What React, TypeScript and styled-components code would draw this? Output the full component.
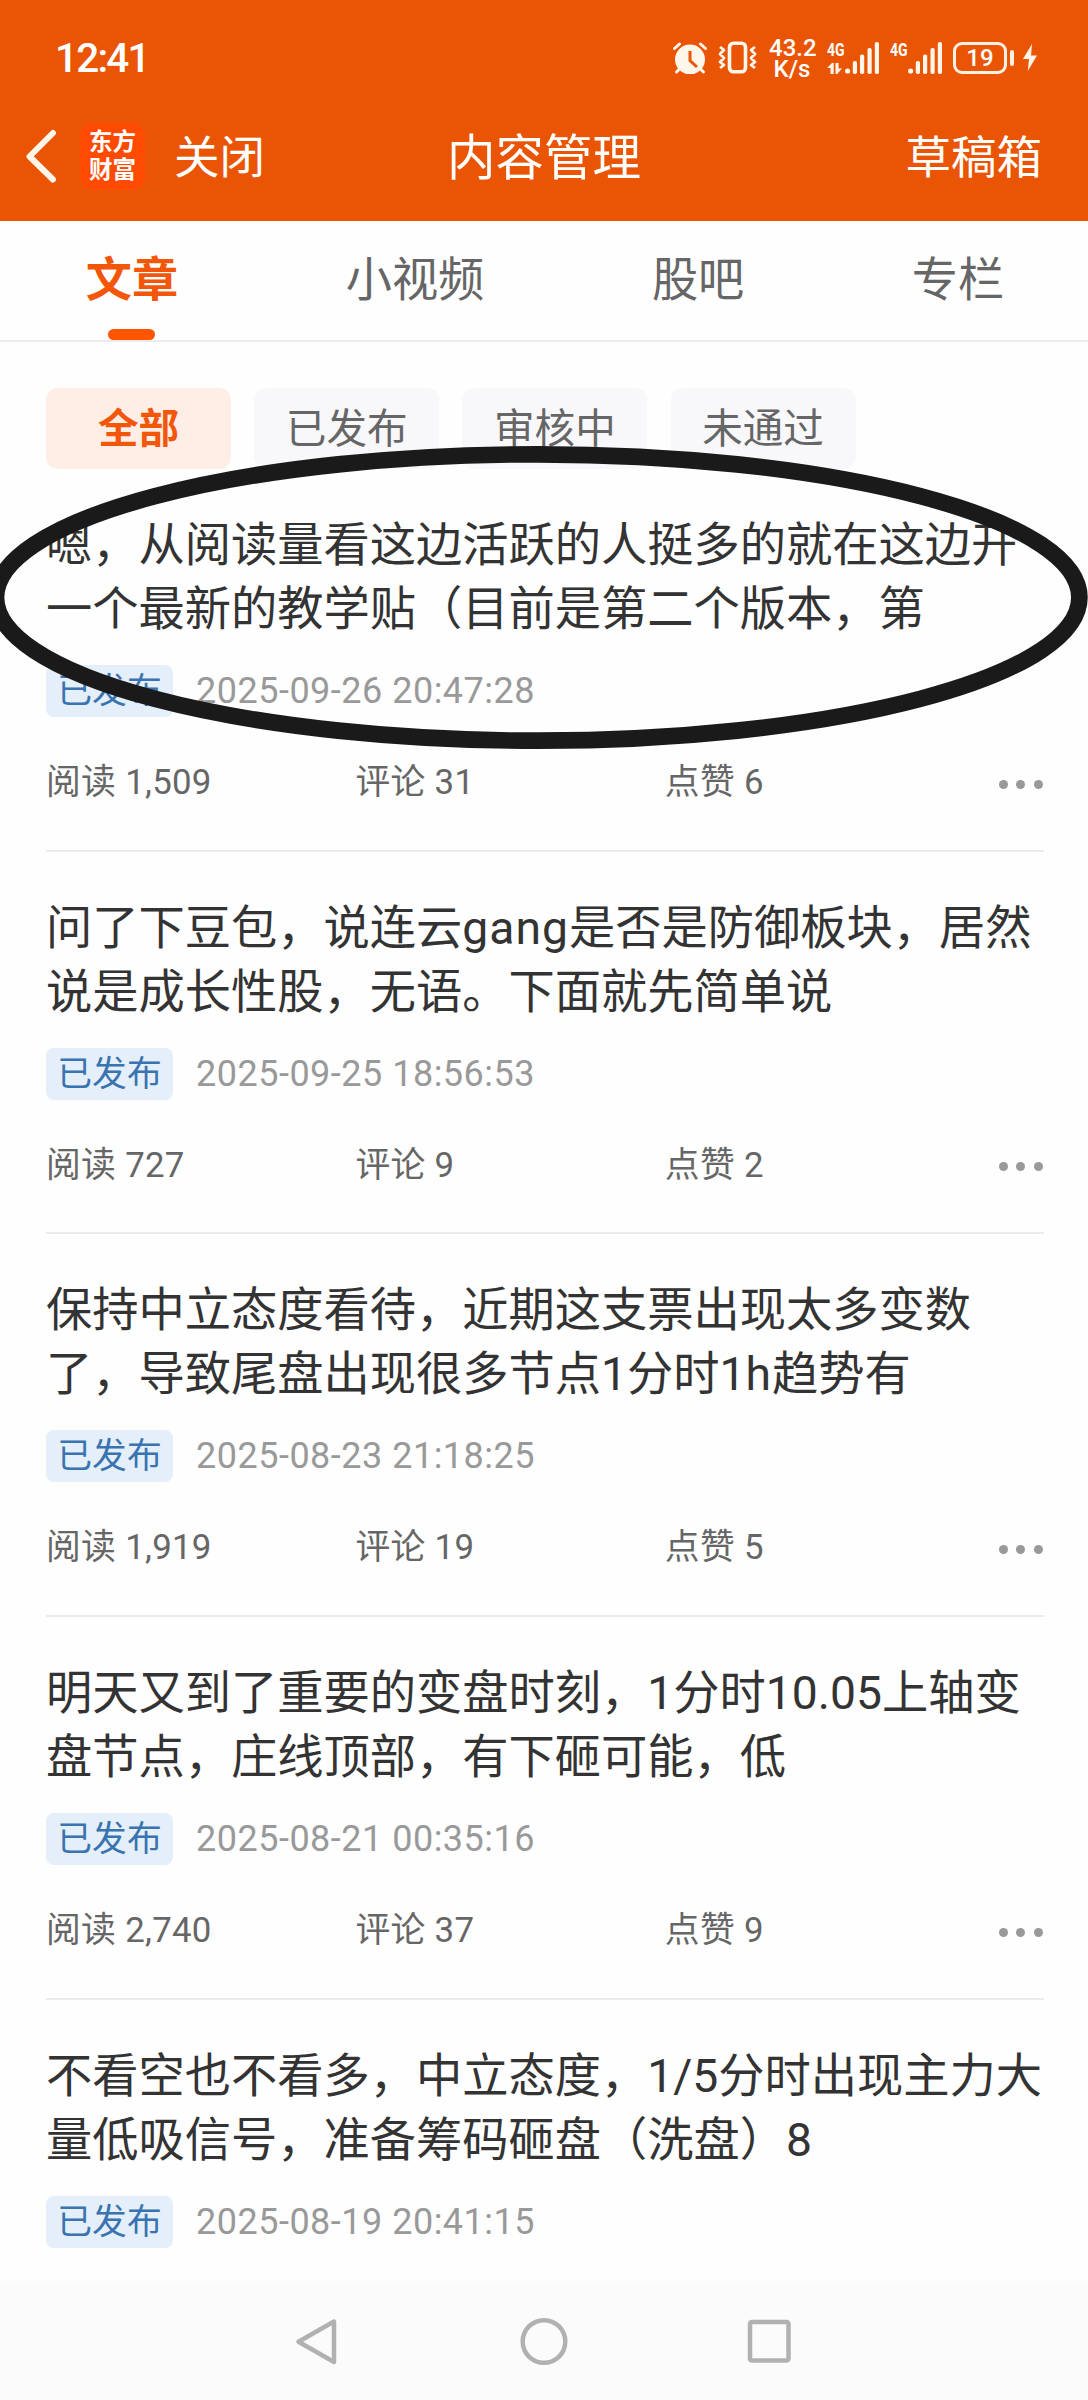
import React from "react";
import styled, { createGlobalStyle } from "styled-components";

const GlobalStyle = createGlobalStyle`
  *, *::before, *::after { box-sizing: border-box; }
  body {
    margin: 0;
    background: #fefefe;
    font-family: Roboto, "Noto Sans CJK SC", sans-serif;
    color: #333;
    -webkit-font-smoothing: antialiased;
  }
`;

const Screen = styled.div`
  position: relative;
  width: 1088px;
  height: 2400px;
  overflow: hidden;
  display: flex;
  flex-direction: column;
  background: #fefefe;
`;

/* ---------- header ---------- */

const Header = styled.header`
  flex: none;
  height: 221px;
  background: #e95504;
  color: #fff;
`;

const StatusBar = styled.div`
  height: 115px;
  padding: 0 51px 0 55px;
  display: flex;
  align-items: center;
  justify-content: space-between;
`;

const Clock = styled.span`
  font-size: 40.5px;
  font-weight: 500;
  letter-spacing: -1.8px;
  line-height: 1;
  padding-top: 1px;
`;

const StatusIcons = styled.div`
  display: flex;
  align-items: center;
  svg { display: block; }
`;

const Speed = styled.div`
  width: 46px;
  margin: 2px 12px 0 12px;
  text-align: center;
  font-size: 24px;
  font-weight: 500;
  line-height: 21px;
`;

const Signal = styled.div<{ $gap: number }>`
  display: flex;
  align-items: flex-end;
  height: 32px;
  margin-right: ${(p) => p.$gap}px;
`;

const SignalLabel = styled.div`
  width: 18px;
  height: 32px;
  display: flex;
  flex-direction: column;
  justify-content: space-between;
  font-size: 19px;
  font-weight: 700;
  line-height: 15px;
  span {
    display: block;
    transform: scaleX(0.74);
    transform-origin: left center;
  }
`;

const Battery = styled.div`
  width: 54px;
  height: 32px;
  border: 3.5px solid #fff2e4;
  border-radius: 9px;
  display: flex;
  align-items: center;
  justify-content: center;
  font-size: 24px;
  font-weight: 500;
  line-height: 1;
`;

const BatteryTip = styled.div`
  width: 4px;
  height: 16px;
  margin: 0 9px 0 3px;
  border-radius: 2px;
  background: #fff2e4;
`;

const NavBar = styled.div`
  height: 82px;
  padding: 0 46px 0 25px;
  display: grid;
  grid-template-columns: 1fr auto 1fr;
  align-items: center;
`;

const NavLeft = styled.div`
  display: flex;
  align-items: center;
  svg { display: block; }
`;

const Logo = styled.div`
  width: 65px;
  height: 67px;
  margin: 0 29px 0 23px;
  border-radius: 13px;
  background: #ff4a02;
  display: flex;
  flex-direction: column;
  align-items: center;
  justify-content: center;
  font-size: 23.5px;
  font-weight: 700;
  line-height: 28px;
`;

const NavText = styled.span`
  padding-top: 5px;
  font-size: 45.5px;
  line-height: 60px;
`;

const NavTitle = styled.h1`
  margin: 5px 0 0 21px;
  font-size: 48.5px;
  font-weight: 400;
  line-height: 60px;
`;

const NavRight = styled.div`
  display: flex;
  justify-content: flex-end;
`;

/* ---------- tabs and filters ---------- */

const Tabs = styled.nav`
  flex: none;
  height: 121px;
  padding-left: 2px;
  display: flex;
  justify-content: space-around;
  border-bottom: 2px solid #ededed;
`;

const Tab = styled.div<{ $active?: boolean }>`
  display: flex;
  flex-direction: column;
  align-items: center;
  justify-content: space-between;
  padding-top: 24px;
  font-size: 46.2px;
  line-height: 70px;
  font-weight: ${(p) => (p.$active ? 700 : 400)};
  color: ${(p) => (p.$active ? "#f2560a" : "#666")};
`;

const TabMark = styled.i`
  width: 47px;
  height: 11px;
  border-radius: 6px;
  background: #ff5500;
`;

const Filters = styled.div`
  flex: none;
  display: flex;
  gap: 23.2px;
  padding: 46px 46px 0;
`;

const Chip = styled.div<{ $active?: boolean }>`
  width: 185px;
  height: 81px;
  border-radius: 12px;
  display: flex;
  align-items: center;
  justify-content: center;
  font-size: 40.6px;
  line-height: 60px;
  font-weight: ${(p) => (p.$active ? 700 : 400)};
  color: ${(p) => (p.$active ? "#f2560a" : "#666")};
  background: ${(p) => (p.$active ? "#ffeee6" : "#f8f8fb")};
`;

/* ---------- article list ---------- */

const List = styled.main`
  flex: 1;
  min-height: 0;
  overflow: hidden;
  padding: 0 44.500px 0 46px;
`;

const Article = styled.article`
  height: 382.7px;
  padding-top: 44px;
  border-bottom: 2px solid #ebebeb;
`;

const Title = styled.h2`
  margin: 0;
  font-size: 46.25px;
  font-weight: 400;
  line-height: 64px;
  white-space: nowrap;
  color: #333;
`;

const Latin = styled.span`
  letter-spacing: 1px;
`;

const Meta = styled.div`
  display: flex;
  align-items: center;
  gap: 23px;
  margin-top: 24px;
  height: 52px;
`;

const Badge = styled.span`
  width: 127px;
  height: 52px;
  border-radius: 8px;
  display: flex;
  align-items: center;
  justify-content: center;
  font-size: 34.8px;
  line-height: 50px;
  color: #3a74b0;
  background: #e4effa;
`;

const Time = styled.time`
  font-size: 36px;
  line-height: 50px;
  letter-spacing: 0.5px;
  color: #999;
`;

const Stats = styled.div`
  display: grid;
  grid-template-columns: 309.4px 309.4px 1fr auto;
  align-items: center;
  margin-top: 40px;
  height: 50px;
  font-size: 34.8px;
  line-height: 50px;
  letter-spacing: 0.3px;
  color: #666;
`;

const More = styled.div`
  display: flex;
  gap: 8.3px;
  margin: 4px 1px 0 0;
  i {
    width: 9px;
    height: 9px;
    border-radius: 50%;
    background: #999;
  }
`;

/* ---------- system navigation ---------- */

const SystemBar = styled.footer`
  flex: none;
  height: 117px;
  background: #fbfbfb;
  display: flex;
  justify-content: center;
  padding-top: 34px;
  gap: 177px;
  svg { display: block; }
`;

/* hand-drawn ring laid over the first article */
const Ring = styled.svg`
  position: absolute;
  left: 0;
  top: 430px;
  pointer-events: none;
`;

const INK = "#fff6ea";

const AlarmIcon = () => (
  <svg width="45" height="32" viewBox="0 0 45 32">
    <circle cx="17" cy="17.5" r="15" fill={INK} />
    <path d="M1.5 6.5 6.5 2M32.5 6.5 27.5 2M6.5 27 3.5 30M27.5 27 30.5 30" stroke={INK} strokeWidth="3" strokeLinecap="round" fill="none" />
    <path d="M17 9v9.5l7 6.5" stroke="#e95504" strokeWidth="3" fill="none" />
  </svg>
);

const VibrateIcon = () => (
  <svg width="39" height="33" viewBox="0 0 39 33" fill="none" stroke={INK}>
    <rect x="11.5" y="2.2" width="16" height="28.6" rx="4" strokeWidth="3.6" />
    <path d="M2 6l4 3-4 4 4 4-4 4 4 3-4 3M37 6l-4 3 4 4-4 4 4 4-4 3 4 3" strokeWidth="2.8" strokeLinejoin="round" />
  </svg>
);

const Bars = () => (
  <svg width="35" height="32" viewBox="0 0 35 32" fill={INK}>
    <circle cx="2.6" cy="29" r="2.6" />
    <rect x="7.8" y="19" width="4.2" height="13" rx="1.8" />
    <rect x="15" y="12.5" width="4.2" height="19.5" rx="1.8" />
    <rect x="22.5" y="6" width="4.2" height="26" rx="1.8" />
    <rect x="29.8" y="0" width="4.2" height="32" rx="1.8" />
  </svg>
);

const DataArrows = () => (
  <svg width="15" height="11" viewBox="0 0 15 11" fill={INK}>
    <path d="M3.5 11V5H0L5 0h1.7v11zM8.5 0h3v5.5H15L10.200 11H8.5z" />
  </svg>
);

const BoltIcon = () => (
  <svg width="14" height="27" viewBox="0 0 14 27" fill={INK}>
    <path d="M9 0 0 15h6L4.8 27 14 11.5H8z" />
  </svg>
);

const BackIcon = () => (
  <svg width="32" height="54" viewBox="0 0 32 54" fill="none" stroke={INK} strokeWidth="6" strokeLinecap="round" strokeLinejoin="round">
    <path d="M28 4 4.5 27.5 28 50.5" />
  </svg>
);

const tabs = ["文章", "小视频", "股吧", "专栏"];
const filters = ["全部", "已发布", "审核中", "未通过"];

interface Post {
  lines: [string, string];
  time: string;
  reads: string;
  comments: string;
  likes: string;
}

const posts: Post[] = [
  {
    lines: ["嗯，从阅读量看这边活跃的人挺多的就在这边开", "一个最新的教学贴（目前是第二个版本，第"],
    time: "2025-09-26 20:47:28",
    reads: "1,509",
    comments: "31",
    likes: "6",
  },
  {
    lines: ["问了下豆包，说连云gang是否是防御板块，居然", "说是成长性股，无语。下面就先简单说"],
    time: "2025-09-25 18:56:53",
    reads: "727",
    comments: "9",
    likes: "2",
  },
  {
    lines: ["保持中立态度看待，近期这支票出现太多变数", "了，导致尾盘出现很多节点1分时1h趋势有"],
    time: "2025-08-23 21:18:25",
    reads: "1,919",
    comments: "19",
    likes: "5",
  },
  {
    lines: ["明天又到了重要的变盘时刻，1分时10.05上轴变", "盘节点，庄线顶部，有下砸可能，低"],
    time: "2025-08-21 00:35:16",
    reads: "2,740",
    comments: "37",
    likes: "9",
  },
  {
    lines: ["不看空也不看多，中立态度，1/5分时出现主力大", "量低吸信号，准备筹码砸盘（洗盘）8"],
    time: "2025-08-19 20:41:15",
    reads: "",
    comments: "",
    likes: "",
  },
];

/* Latin words inside a Chinese title get a little extra tracking */
const withLatin = (line: string) =>
  line.split(/([a-z]+)/).map((part, i) => (i % 2 ? <Latin key={i}>{part}</Latin> : part));

export default function App() {
  return (
    <Screen lang="zh-CN">
      <GlobalStyle />
      <Header>
        <StatusBar>
          <Clock>12:41</Clock>
          <StatusIcons>
            <AlarmIcon />
            <VibrateIcon />
            <Speed>
              43.2
              <br />
              K/s
            </Speed>
            <Signal $gap={10}>
              <SignalLabel>
                <span>4G</span>
                <DataArrows />
              </SignalLabel>
              <Bars />
            </Signal>
            <Signal $gap={10}>
              <SignalLabel>
                <span>4G</span>
              </SignalLabel>
              <Bars />
            </Signal>
            <Battery>19</Battery>
            <BatteryTip />
            <BoltIcon />
          </StatusIcons>
        </StatusBar>
        <NavBar>
          <NavLeft>
            <BackIcon />
            <Logo>
              <span>东方</span>
              <span>财富</span>
            </Logo>
            <NavText>关闭</NavText>
          </NavLeft>
          <NavTitle>内容管理</NavTitle>
          <NavRight>
            <NavText>草稿箱</NavText>
          </NavRight>
        </NavBar>
      </Header>

      <Tabs>
        {tabs.map((t, i) => (
          <Tab key={t} $active={i === 0}>
            {t}
            {i === 0 && <TabMark />}
          </Tab>
        ))}
      </Tabs>

      <Filters>
        {filters.map((f, i) => (
          <Chip key={f} $active={i === 0}>
            {f}
          </Chip>
        ))}
      </Filters>

      <List>
        {posts.map((p) => (
          <Article key={p.time}>
            <Title>
              {withLatin(p.lines[0])}
              <br />
              {withLatin(p.lines[1])}
            </Title>
            <Meta>
              <Badge>已发布</Badge>
              <Time>{p.time}</Time>
            </Meta>
            {p.reads && (
              <Stats>
                <span>阅读 {p.reads}</span>
                <span>评论 {p.comments}</span>
                <span>点赞 {p.likes}</span>
                <More>
                  <i />
                  <i />
                  <i />
                </More>
              </Stats>
            )}
          </Article>
        ))}
      </List>

      <SystemBar>
        <svg width="48" height="50" viewBox="0 0 48 50" fill="none" stroke="#b1b1b1" strokeWidth="4.5" strokeLinejoin="round">
          <path d="M39 4.5V45L3.5 24.7z" />
        </svg>
        <svg width="48" height="50" viewBox="0 0 48 50" fill="none" stroke="#b1b1b1" strokeWidth="4.5">
          <circle cx="24" cy="24.5" r="21.3" />
        </svg>
        <svg width="48" height="50" viewBox="0 0 48 50" fill="none" stroke="#b1b1b1" strokeWidth="4.5">
          <rect x="5" y="5" width="38.5" height="38.5" rx="2" />
        </svg>
      </SystemBar>

      <Ring width="1088" height="330" viewBox="0 430 1088 330" fill="none" stroke="#1a1a1a" strokeWidth="16.7">
        <ellipse cx="537.7" cy="597.5" rx="541.7" ry="143.2" />
      </Ring>
    </Screen>
  );
}
